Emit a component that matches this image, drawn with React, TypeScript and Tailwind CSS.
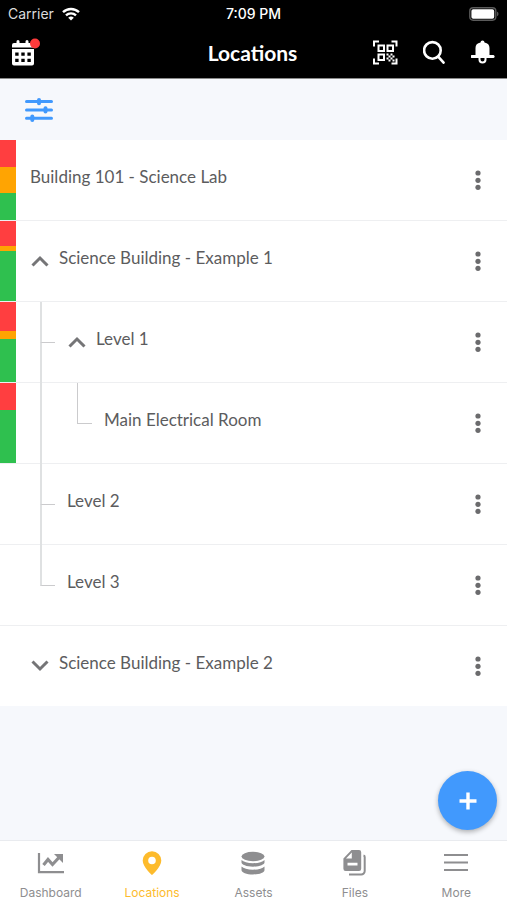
import { useState, type ReactNode } from "react";

type Guide = "tee" | "line" | "end";

type Row = {
  name: string;
  guides: Guide[];
  open?: boolean;
  status?: { red: number; orange: number; green: number };
};

const ROWS: Row[] = [
  { name: "Building 101 - Science Lab", guides: [], status: { red: 27, orange: 26, green: 27 } },
  { name: "Science Building - Example 1", guides: [], open: true, status: { red: 25, orange: 5, green: 50 } },
  { name: "Level 1", guides: ["tee"], open: true, status: { red: 29, orange: 8, green: 43 } },
  { name: "Main Electrical Room", guides: ["line", "end"], status: { red: 27, orange: 0, green: 53 } },
  { name: "Level 2", guides: ["tee"] },
  { name: "Level 3", guides: ["end"] },
  { name: "Science Building - Example 2", guides: [], open: false },
];

const TABS: { label: string; icon: ReactNode }[] = [
  { label: "Dashboard", icon: <ChartIcon /> },
  { label: "Locations", icon: <PinIcon /> },
  { label: "Assets", icon: <DatabaseIcon /> },
  { label: "Files", icon: <FilesIcon /> },
  { label: "More", icon: <MenuIcon /> },
];

export default function App() {
  const [tab, setTab] = useState("Locations");

  return (
    <div className="flex min-h-screen flex-col bg-[#f6f8fc] font-[Lato,sans-serif] text-[#5c5c5e]">
      <header className="border-b border-[#8a8a8a] bg-black text-white">
        {/* Phone status bar */}
        <div className="grid h-7 grid-cols-3 items-center px-2 font-[Inter,sans-serif] text-sm">
          <div className="flex items-center gap-2 text-[#dcdcdc]">
            <span>Carrier</span>
            <WifiIcon />
          </div>
          <span className="text-center font-medium">7:09 PM</span>
          <div className="flex justify-end">
            <BatteryIcon />
          </div>
        </div>

        {/* Title bar */}
        <div className="grid h-[50px] grid-cols-[1fr_auto_1fr] items-center pr-3 pl-2.5">
          <button type="button" aria-label="Calendar" className="justify-self-start">
            <CalendarIcon />
          </button>
          <h1 className="text-[21px] leading-7 font-bold">Locations</h1>
          <div className="flex items-center gap-6 justify-self-end">
            <button type="button" aria-label="Scan code"><ScanIcon /></button>
            <button type="button" aria-label="Search"><SearchIcon /></button>
            <button type="button" aria-label="Notifications"><BellIcon /></button>
          </div>
        </div>
      </header>

      <main className="relative flex-1">
        <div className="flex h-[61px] items-center px-6">
          <button type="button" aria-label="Filter">
            <SlidersIcon />
          </button>
        </div>

        <ul className="bg-white">
          {ROWS.map((row) => (
            <LocationRow key={row.name} row={row} />
          ))}
        </ul>

        <button
          type="button"
          aria-label="Add location"
          className="absolute right-2.5 bottom-2.5 flex size-[59px] items-center justify-center rounded-full bg-[#4199fd] shadow-[0_2px_5px_rgba(0,0,0,0.3)]"
        >
          <svg width="18" height="18" viewBox="0 0 18 18" stroke="#fff" strokeWidth="3.4">
            <path d="M9 0.5v17M0.5 9h17" />
          </svg>
        </button>
      </main>

      <nav className="grid h-[60px] grid-cols-5 border-t border-[#e9ebef] bg-white font-[Inter,sans-serif] text-xs">
        {TABS.map((t) => (
          <a
            key={t.label}
            href={`#${t.label.toLowerCase()}`}
            onClick={() => setTab(t.label)}
            className={`flex flex-col items-center gap-2 pt-2 ${
              tab === t.label ? "text-[#fdbb2c]" : "text-[#8e8e90]"
            }`}
          >
            {t.icon}
            <span>{t.label}</span>
          </a>
        ))}
      </nav>
    </div>
  );
}

function LocationRow({ row }: { row: Row }) {
  return (
    <li className="flex border-b border-[#eeeff1] last:border-b-0">
      <div className="flex w-4 shrink-0 flex-col">
        {row.status && (
          <>
            <span className="bg-[#ff3e40]" style={{ flexGrow: row.status.red }} />
            <span className="bg-[#ffa402]" style={{ flexGrow: row.status.orange }} />
            <span className="bg-[#2fc04f]" style={{ flexGrow: row.status.green }} />
          </>
        )}
      </div>
      <div className="flex h-20 flex-1 items-center pl-3.5">
        {row.guides.map((guide, i) => (
          <TreeGuide key={i} guide={guide} thick={i === 0} />
        ))}
        {row.open !== undefined && (
          <button type="button" aria-label={`Toggle ${row.name}`} className="mr-[9px] flex h-10 w-5 items-center justify-center">
            <svg width="18" height="12" viewBox="0 0 18 12" fill="none" stroke="#757577" strokeWidth="3">
              <path d={row.open ? "M1.5 10.5 9 3l7.5 7.5" : "M1.5 1.5 9 9l7.5-7.5"} />
            </svg>
          </button>
        )}
        <span className="flex-1 pb-1.5 text-[17px] leading-6">{row.name}</span>
        <button type="button" aria-label={`Options for ${row.name}`} className="mr-[9px] flex h-10 w-10 items-center justify-center">
          <svg width="6" height="20" viewBox="0 0 6 20" fill="#6b6b6d">
            <circle cx="3" cy="3" r="2.6" />
            <circle cx="3" cy="10.3" r="2.6" />
            <circle cx="3" cy="17.3" r="2.6" />
          </svg>
        </button>
      </div>
    </li>
  );
}

// One level of the tree: the stem runs down the left, the branch leaves it half way
function TreeGuide({ guide, thick }: { guide: Guide; thick: boolean }) {
  const stem = thick ? "border-l-2 border-l-[#dfe1e2]" : "border-l border-l-[#cbcbcd]";
  return (
    <span className="-mb-px flex w-[37px] shrink-0 flex-col self-stretch pl-2.5">
      <span className={`h-[41px] w-[15px] ${stem} ${guide === "line" ? "" : "border-b border-b-[#cbcbcd]"}`} />
      {guide !== "end" && <span className={`w-[15px] flex-1 ${stem}`} />}
    </span>
  );
}

function WifiIcon() {
  return (
    <svg width="18" height="14" viewBox="0 0 18 14" fill="none" stroke="#fff" strokeWidth="2.4">
      <path d="M1 5.2a11.6 11.6 0 0 1 16 0" />
      <path d="M4 8.4a7.2 7.2 0 0 1 10 0" />
      <path d="M9 13.6 6.2 10.8a4 4 0 0 1 5.6 0z" fill="#fff" stroke="none" />
    </svg>
  );
}

function BatteryIcon() {
  return (
    <svg width="30" height="14" viewBox="0 0 30 14">
      <rect x="0.8" y="0.8" width="26" height="12.4" rx="3.4" fill="none" stroke="#5b5b5b" strokeWidth="1.4" />
      <rect x="2.4" y="2.3" width="22.8" height="9.4" rx="1.8" fill="#fff" />
      <path d="M28.2 4.8c1.6.6 1.6 3.8 0 4.4z" fill="#6b6b6b" />
    </svg>
  );
}

function CalendarIcon() {
  return (
    <svg width="32" height="30" viewBox="0 0 32 30">
      <path d="M5 5h1.5V3.5a1.5 1.5 0 0 1 3 0V5h6V3.500a1.5 1.5 0 0 1 3 0V5H22a2 2 0 0 1 2 2v2.500H2V7a2 2 0 0 1 2-2z" fill="#fff" />
      <path
        fill="#fff"
        fillRule="evenodd"
        d="M2 11h22v14.500a2 2 0 0 1-2 2H4a2 2 0 0 1-2-2zM5.200 14.500v3.200h3.400v-3.200zM11.300 14.500v3.200h3.400v-3.200zM17.400 14.500v3.200h3.400v-3.200zM5.200 20.800V24h3.400v-3.200zM11.300 20.800V24h3.400v-3.200zM17.400 20.800V24h3.400v-3.200z"
      />
      <circle cx="25" cy="5.5" r="5" fill="#ff3b3b" />
    </svg>
  );
}

function ScanIcon() {
  return (
    <svg width="26" height="26" viewBox="0 0 26 26" fill="none" stroke="#fff" strokeWidth="2">
      <path d="M1 6.500V1.500h5M18.500 1.500h5v5M23.500 18.500v5h-5M6 23.500H1v-5" strokeWidth="2" />
      <path d="M5.500 5.500h5.500V11H5.500zM14.500 5.500H20V11h-5.500zM5.500 14.500H11V20H5.500z" />
      <path
        stroke="none"
        fill="#fff"
        d="M13.500 13.500h2v2h-2zM17.500 13.500h2v2h-2zM15.500 15.500h2v2h-2zM19.500 15.500h2v2h-2zM13.500 17.500h2v2h-2zM17.500 17.500h2v2h-2zM15.500 19.500h2v2h-2zM19.500 19.500h2v2h-2z"
      />
    </svg>
  );
}

function SearchIcon() {
  return (
    <svg width="24" height="26" viewBox="0 0 24 26" fill="none" stroke="#fff" strokeWidth="2.6" strokeLinecap="round">
      <circle cx="9.4" cy="10.4" r="8.3" />
      <path d="M15.4 16.800 20.600 22.600" />
    </svg>
  );
}

function BellIcon() {
  return (
    <svg width="24" height="26" viewBox="0 0 24 26">
      <path d="M9.500 2.600a2 2 0 0 1 4 0c3.300.500 5 2.600 5 5.400v7h3a1.500 1.500 0 0 1 1 3H.500a1.500 1.500 0 0 1 1-3h3V8c0-2.800 1.700-4.900 5-5.400z" fill="#fff" />
      <path d="M8.500 18v1.500a3 3 0 0 0 6 0V18" fill="none" stroke="#fff" strokeWidth="2" />
    </svg>
  );
}

function SlidersIcon() {
  return (
    <svg width="30" height="26" viewBox="0 0 30 26" fill="none" stroke="#4199fd" strokeLinecap="round">
      <path d="M2.500 4.600h25M2.500 12.900h25M2.500 21.300h25" strokeWidth="3" />
      <path d="M15 2.900v3.400M21.500 11.200v3.400M8.300 19.600V23" strokeWidth="4" />
    </svg>
  );
}

function ChartIcon() {
  return (
    <svg width="28" height="28" viewBox="0 0 28 28" fill="none" stroke="currentColor">
      <path d="M2 4v19.200h25" strokeWidth="2.200" />
      <path d="M6.500 16 11 10.500l4.500 5 6.500-7" strokeWidth="3.200" />
      <path d="M17 5h9v9z" fill="currentColor" stroke="none" />
    </svg>
  );
}

function PinIcon() {
  return (
    <svg width="28" height="28" viewBox="0 0 28 28" fill="currentColor">
      <path
        fillRule="evenodd"
        d="M14 2.200a9.300 9.300 0 0 0-9.300 9.300c0 6.600 9.300 14.600 9.300 14.600s9.300-8 9.300-14.600A9.300 9.300 0 0 0 14 2.200zm0 5.500a3.800 3.800 0 1 1 0 7.600 3.800 3.800 0 0 1 0-7.600z"
      />
    </svg>
  );
}

function DatabaseIcon() {
  return (
    <svg width="28" height="28" viewBox="0 0 28 28" fill="currentColor">
      <ellipse cx="14" cy="7.500" rx="11.500" ry="4.700" />
      <path d="M2.500 11c2 2 6 3.200 11.500 3.200S23.500 13 25.500 11v2.500c0 2-5 4.200-11.500 4.200S2.500 15.500 2.500 13.500z" />
      <path d="M2.500 17.500c2 2 6 3.200 11.500 3.200s9.500-1.200 11.500-3.200V21c0 2.600-5 4.500-11.500 4.500S2.500 23.600 2.500 21z" />
    </svg>
  );
}

function FilesIcon() {
  return (
    <svg width="28" height="28" viewBox="0 0 28 28">
      <path
        fill="currentColor"
        fillRule="evenodd"
        d="M10.500 1H18a2.200 2.200 0 0 1 2.200 2.200v16.500A2.200 2.200 0 0 1 18 21.900H4.600a2.200 2.200 0 0 1-2.200-2.200V9.500zM10.800 3.500 5 9.600h5.800zM6.500 13.800v2.600h10v-2.600z"
      />
      <path d="M22.500 6.500a1.500 1.500 0 0 1 1.200 1.500v14a3.500 3.500 0 0 1-3.500 3.500H8" fill="none" stroke="currentColor" strokeWidth="2" />
    </svg>
  );
}

function MenuIcon() {
  return (
    <svg width="28" height="28" viewBox="0 0 28 28" stroke="currentColor" strokeWidth="2.200">
      <path d="M2 6h24M2 13.500h24M2 21h24" />
    </svg>
  );
}
